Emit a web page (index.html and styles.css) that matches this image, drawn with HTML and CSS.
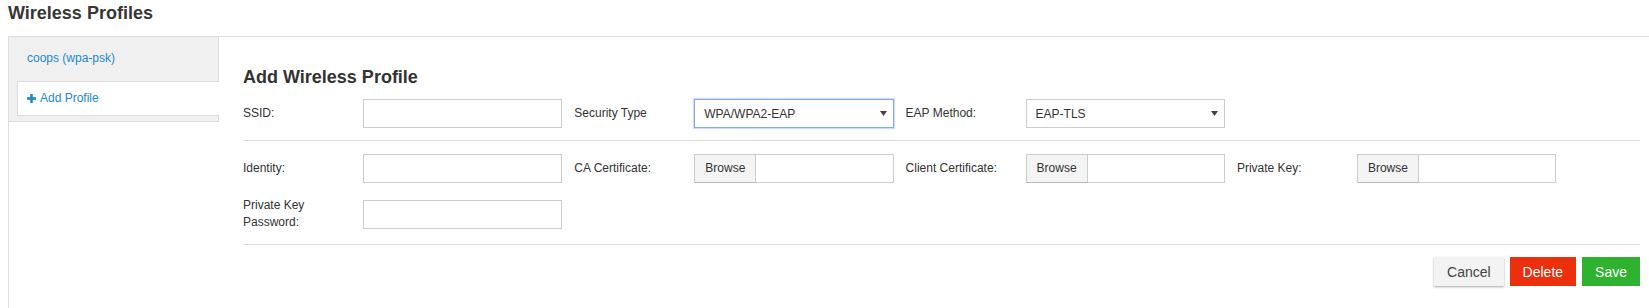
FILE: index.html
```html
<!DOCTYPE html>
<html>
<head>
<meta charset="utf-8">
<title>Wireless Profiles</title>
<link rel="stylesheet" href="styles.css">
</head>
<body>
<div class="page">
  <h2 class="page-title">Wireless Profiles</h2>
  <div class="panel">
    <ul class="tabs">
      <li class="tab"><a class="tab-link">coops (wpa-psk)</a></li>
      <li class="tab active"><a class="tab-link"><svg class="plus" width="9" height="9" viewBox="0 0 9 9"><rect x="3.2" y="0" width="2.6" height="9" fill="currentColor"/><rect x="0" y="3.2" width="9" height="2.6" fill="currentColor"/></svg>Add Profile</a></li>
    </ul>
    <div class="content">
      <h3 class="form-title">Add Wireless Profile</h3>
      <div class="section first">
        <div class="fields">
          <div class="field"><label class="label">SSID:</label><input class="control input" type="text"></div>
          <div class="field"><label class="label">Security Type</label><div class="control select focused"><span>WPA/WPA2-EAP</span><svg class="arrow" width="7" height="5" viewBox="0 0 7 5"><path d="M0 0H7L3.5 5Z" fill="#444"/></svg></div></div>
          <div class="field"><label class="label">EAP Method:</label><div class="control select"><span>EAP-TLS</span><svg class="arrow" width="7" height="5" viewBox="0 0 7 5"><path d="M0 0H7L3.5 5Z" fill="#444"/></svg></div></div>
        </div>
      </div>
      <div class="section">
        <div class="fields">
          <div class="field"><label class="label">Identity:</label><input class="control input" type="text"></div>
          <div class="field"><label class="label">CA Certificate:</label><div class="control file"><span class="browse">Browse</span><span class="file-name"></span></div></div>
          <div class="field"><label class="label">Client Certificate:</label><div class="control file"><span class="browse">Browse</span><span class="file-name"></span></div></div>
          <div class="field"><label class="label">Private Key:</label><div class="control file"><span class="browse">Browse</span><span class="file-name"></span></div></div>
          <div class="field"><label class="label">Private Key Password:</label><input class="control input" type="password"></div>
        </div>
      </div>
      <div class="actions">
        <button class="btn btn-cancel">Cancel</button>
        <button class="btn btn-delete">Delete</button>
        <button class="btn btn-save">Save</button>
      </div>
    </div>
  </div>
</div>
</body>
</html>
```
FILE: styles.css
```css
html, body {
  margin: 0;
  padding: 0;
  background: #fff;
  font-family: "Liberation Sans", Arial, sans-serif;
  color: #333;
  overflow: hidden;
}
.page {
  padding: 3px 0 0 8px;
}
.page-title {
  margin: 0 0 13px;
  font-size: 18px;
  line-height: 20px;
  font-weight: 700;
  color: #363636;
}
.panel {
  display: flex;
  align-items: flex-start;
  border-top: 1px solid #ddd;
  border-left: 1px solid #ddd;
  min-height: 271px;
}
.tabs {
  list-style: none;
  margin: 0;
  padding: 0 0 5px;
  width: 210px;
  flex: none;
  box-sizing: border-box;
  background: #f0f0f0;
  border-right: 1px solid #ddd;
  border-bottom: 1px solid #ddd;
}
.tab {
  padding: 13px 0 14px 18px;
  line-height: 17px;
  font-size: 12px;
}
.tab-link {
  color: #1d88cf;
  display: flex;
  align-items: center;
}
.tab.active {
  background: #fff;
  margin: 0 -1px 0 8px;
  padding: 8px 0 8px 9px;
  border: 1px solid #ddd;
  border-right: none;
}
.plus {
  margin-right: 4px;
  color: #1d88cf;
}
.content {
  flex: 1;
  padding: 30px 9px 0 24px;
}
.form-title {
  margin: 0 0 12px;
  font-size: 18px;
  line-height: 20px;
  font-weight: 700;
  color: #333;
}
.section {
  padding: 13px 0;
  border-bottom: 1px solid #ddd;
}
.section.first {
  padding: 0 0 12px;
}
.fields {
  display: grid;
  grid-template-columns: repeat(4, 319.3px);
  column-gap: 12px;
  row-gap: 14px;
}
.field {
  display: flex;
  align-items: center;
}
.label {
  width: 120px;
  flex: none;
  box-sizing: border-box;
  padding-right: 4px;
  font-size: 12px;
  line-height: 17px;
  color: #333;
}
.control {
  flex: 1;
  min-width: 0;
  height: 29px;
  box-sizing: border-box;
  font-family: inherit;
  font-size: 12px;
  color: #333;
}
.input {
  border: 1px solid #ccc;
  padding: 0 8px;
  margin: 0;
  background: #fff;
  outline: none;
}
.select {
  display: flex;
  align-items: center;
  justify-content: space-between;
  border: 1px solid #ccc;
  padding: 0 6px 0 9px;
  background: #fff;
}
.select.focused {
  border-color: #83aaee;
  box-shadow: 0 0 1px 1px rgba(120, 160, 235, 0.35);
}
.file {
  display: flex;
}
.browse {
  flex: none;
  background: #f4f4f4;
  border: 1px solid #ccc;
  border-bottom-color: #b8b8b8;
  padding: 0 10px;
  line-height: 27px;
  color: #333;
}
.file-name {
  flex: 1;
  border: 1px solid #ccc;
  border-left: none;
  background: #fff;
}
.actions {
  display: flex;
  justify-content: flex-end;
  gap: 6px;
  padding-top: 12px;
}
.btn {
  height: 29px;
  padding: 0 13px;
  border: none;
  font-family: inherit;
  font-size: 14px;
  color: #fff;
  cursor: pointer;
}
.btn-cancel {
  background: #f3f3f3;
  color: #444;
  box-shadow: 0 1px 2px rgba(0, 0, 0, 0.35);
}
.btn-delete {
  background: #ec2f0d;
}
.btn-save {
  background: #2eb22f;
}
```
